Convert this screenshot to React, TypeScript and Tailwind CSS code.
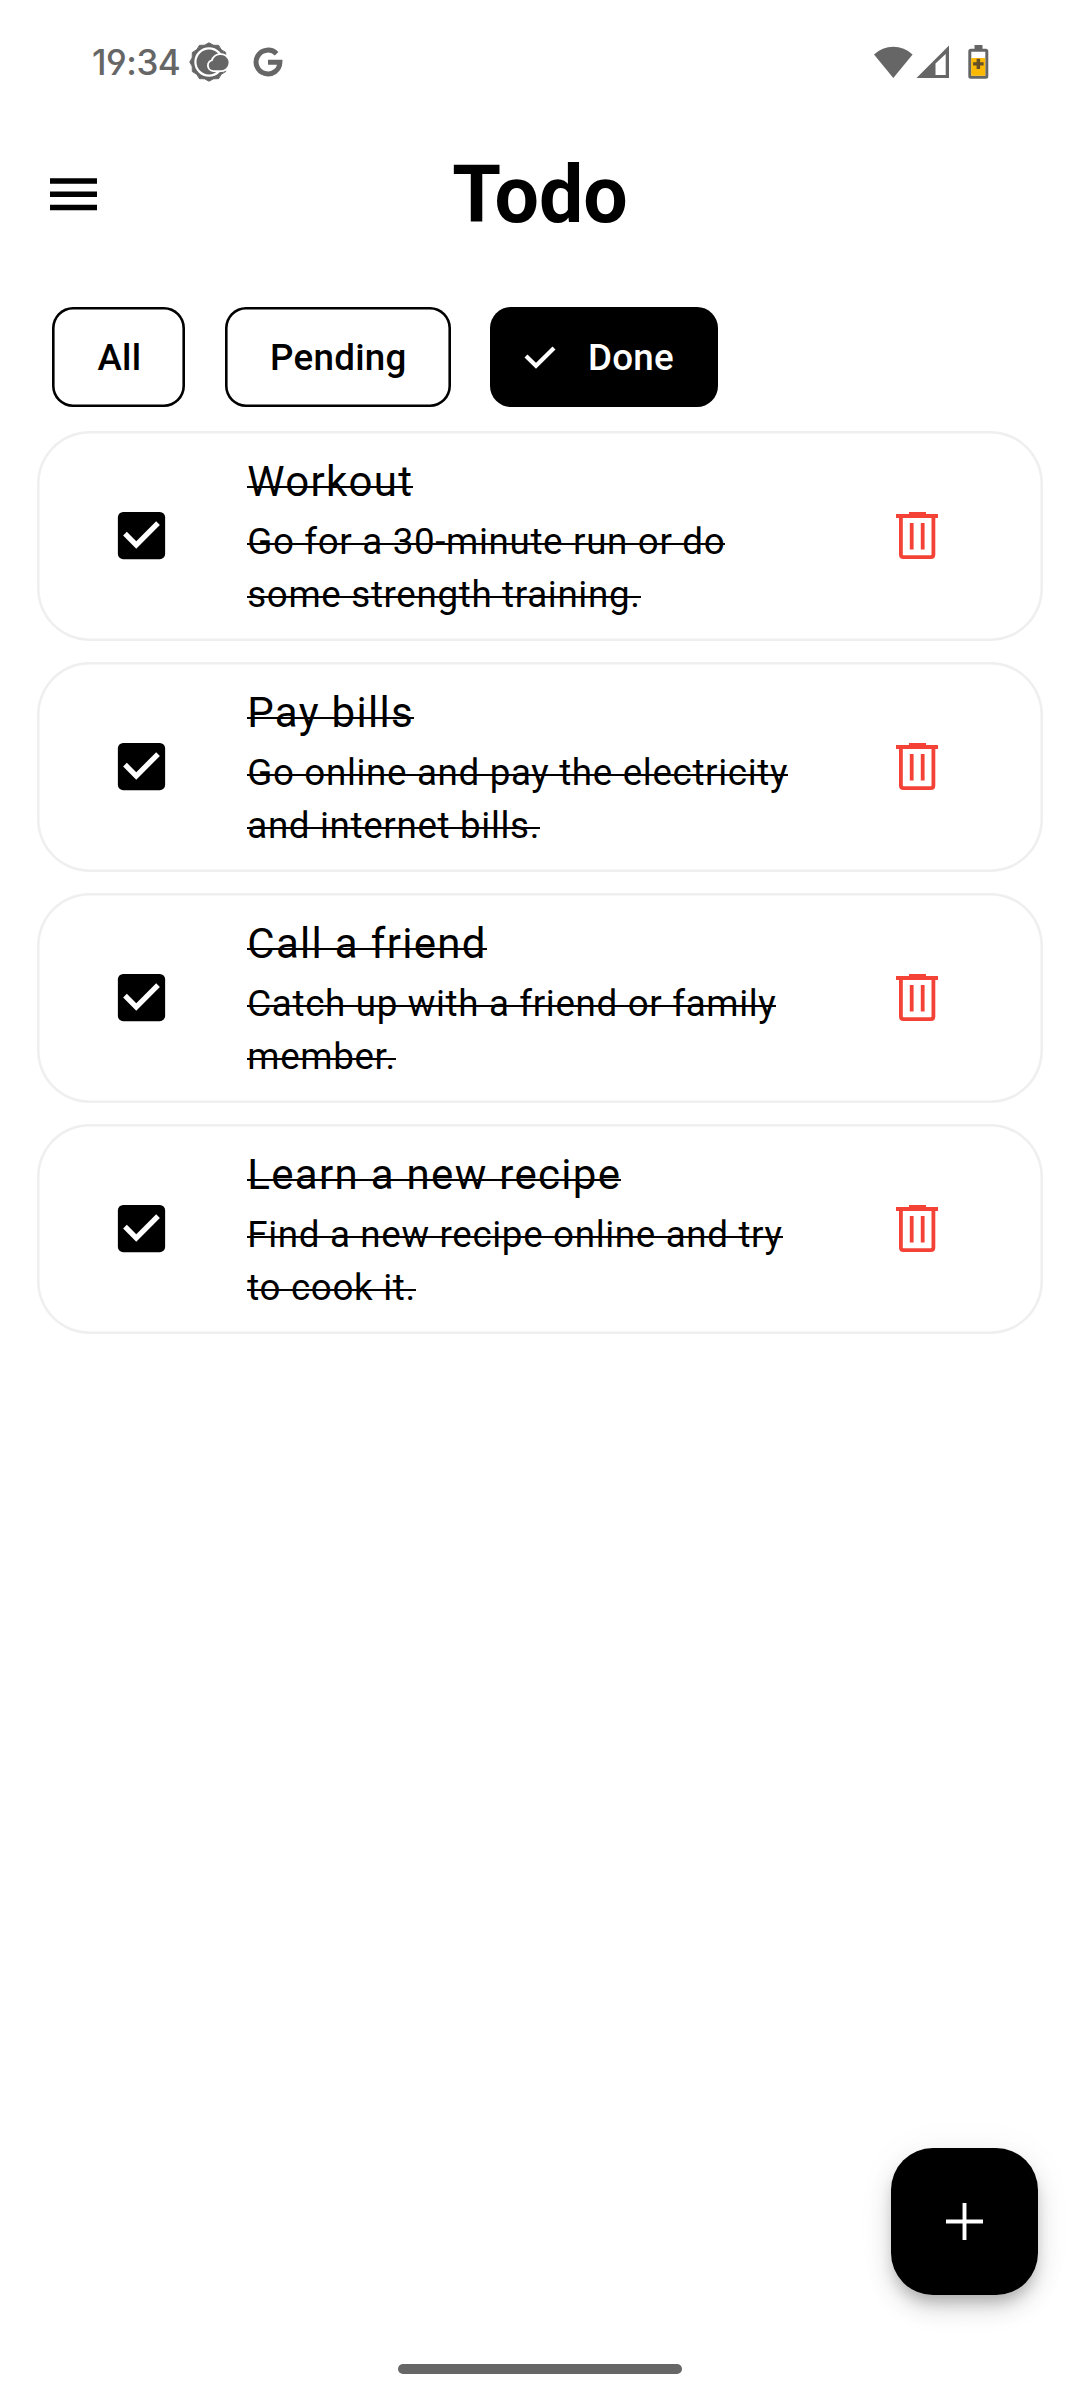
const tasks = [
  { title: "Workout", lines: ["Go for a 30-minute run or do", "some strength training."] },
  { title: "Pay bills", lines: ["Go online and pay the electricity", "and internet bills."] },
  { title: "Call a friend", lines: ["Catch up with a friend or family", "member."] },
  { title: "Learn a new recipe", lines: ["Find a new recipe online and try", "to cook it."] },
];

// Outline of the weather badge: twelve teeth joined by shallow curves.
function badgePath() {
  const n = 12;
  const at = (r: number, a: number) =>
    `${(20 + r * Math.cos(a)).toFixed(2)} ${(20 + r * Math.sin(a)).toFixed(2)}`;
  let d = `M${at(19.2, -Math.PI / 2)}`;
  for (let i = 0; i < n; i++) {
    const a = -Math.PI / 2 + (i * 2 * Math.PI) / n;
    const step = (2 * Math.PI) / n;
    d += `Q${at(16.2, a + step / 2)} ${at(19.2, a + step)}`;
  }
  return d + "Z";
}

function WeatherIcon() {
  const cloud = "M24.2 28.2a4.7 4.7 0 0 1-.6-9.3a8.3 8.3 0 0 1 15.2-1.6a7.6 7.6 0 0 1-6.6 10.9z";
  return (
    <svg className="h-10 w-10 shrink-0" viewBox="0 0 40 40">
      <path d={badgePath()} fill="#666" stroke="#666" strokeWidth="1" strokeLinejoin="round" />
      <circle cx="20" cy="20" r="13.6" fill="#666" stroke="#fff" strokeWidth="2.2" />
      <path d={cloud} fill="#fff" stroke="#fff" strokeWidth="3.6" />
      <path d={cloud} fill="#666" />
    </svg>
  );
}

function StatusBar() {
  return (
    <div className="flex h-[124px] items-center pl-[92px] pr-[91px] text-[#666]">
      <span className="w-[97px] whitespace-nowrap font-[Inter] text-[35px] leading-none font-medium tracking-[-0.5px] [font-feature-settings:'cv04','cv03']">
        19:34
      </span>
      <WeatherIcon />
      <svg className="ml-6 h-[30px] w-[30px]" viewBox="0 0 30 30">
        <path d="M23.6 6.8A11.9 11.9 0 1 0 26.9 15.3H15" fill="none" stroke="#666" strokeWidth="5" />
      </svg>
      <div className="ml-auto flex items-center">
        <svg className="h-[34px] w-[40px]" viewBox="0 0 40 34">
          <path d="M1 9.5A28 28 0 0 1 39.6 9.5L20.3 33z" fill="#666" />
        </svg>
        <svg className="ml-[3px] h-[34px] w-[34px]" viewBox="0 0 34 34">
          <path fillRule="evenodd" d="M0.5 33L33 .5V33zM19.5 18.5V30H29.7V9z" fill="#666" />
        </svg>
        <svg className="ml-[18px] h-[34px] w-[21px]" viewBox="0 0 21 34">
          <path d="M6.5 0h8v4h-8z" fill="#666" />
          <rect x="1.8" y="5.2" width="17" height="27" rx="1" fill="#fff" stroke="#666" strokeWidth="3" />
          <rect x="3.2" y="13" width="14" height="17.8" fill="#fbb904" />
          <path d="M8.6 13.8h3.5v3.4h3.5v3.4h-3.5v3.4H8.6v-3.4H5.1v-3.4h3.5z" fill="#665028" />
        </svg>
      </div>
    </div>
  );
}

function Chip({ label, selected = false, width }: { label: string; selected?: boolean; width: string }) {
  return (
    <button
      className={`flex h-[100px] items-center justify-center rounded-[21px] pt-[2px] text-[36.75px] font-medium tracking-[0.26px] ${width} ${
        selected ? "bg-black pr-[11px] text-white" : "pl-px text-black shadow-[inset_0_0_0_2.6px_#000]"
      }`}
    >
      {selected && (
        <svg className="mr-[32px] mb-[2px] h-[24px] w-[32px]" viewBox="0 0 32 24" fill="none">
          <path d="M2 11L12 20.8L30 3" stroke="#fff" strokeWidth="4.2" />
        </svg>
      )}
      {label}
    </button>
  );
}

function TrashIcon() {
  return (
    <svg className="h-[48px] w-[42px]" viewBox="0 0 42 48">
      <path d="M13 0h17v2h12v4H0V2h13z" fill="#f44336" />
      <path d="M4.9 5v37.5q0 2.6 2.6 2.6h27.3q2.6 0 2.6-2.6V5" fill="none" stroke="#f44336" strokeWidth="3.8" />
      <path d="M13.8 11h3.8v26.5h-3.8zM24.8 11h3.8v26.5h-3.8z" fill="#f44336" />
    </svg>
  );
}

function Task({ title, lines }: { title: string; lines: string[] }) {
  return (
    <li className="flex h-[210px] items-center rounded-[52.5px] pr-[105px] pl-[73px] shadow-[inset_0_0_0_2.6px_#efefef]">
      <svg className="mb-[2px] h-[63px] w-[63px] shrink-0" viewBox="0 0 24 24">
        <rect x="3" y="3" width="18" height="18" rx="2" />
        <path d="M10 17l-5-5 1.41-1.41L10 14.17l7.59-7.59L19 8z" fill="#fff" />
      </svg>
      <div className="mt-[19px] ml-[74.5px] flex-1 self-start whitespace-nowrap">
        <h2 className="text-[42px] leading-[63px] tracking-[1.3125px]">
          <span className="bg-[linear-gradient(#000,#000)] bg-[length:100%_2px] bg-[position:0_29px] bg-no-repeat">
            {title}
          </span>
        </h2>
        <p className="mt-[2px] text-[36.75px] leading-[53px] tracking-[0.656px]">
          {lines.map((line) => (
            <span key={line} className="block">
              <span className="bg-[linear-gradient(#000,#000)] bg-[length:100%_2px] bg-[position:0_23px] bg-no-repeat">
                {line}
              </span>
            </span>
          ))}
        </p>
      </div>
      <TrashIcon />
    </li>
  );
}

export default function App() {
  return (
    <div className="relative flex h-[2400px] w-[1080px] flex-col overflow-hidden bg-white font-[Roboto,sans-serif] text-black">
      <StatusBar />
      <header className="relative flex h-[140px] items-center justify-center">
        <svg className="absolute left-[50px] top-[54px] h-[33px] w-[47px]" viewBox="0 0 47 33">
          <path d="M0 0.3h47v5.4H0zM0 13.6h47v5.3H0zM0 26.8h47v5.4H0z" />
        </svg>
        <h1 className="pt-[3px] text-[78.75px] leading-none font-bold">Todo</h1>
      </header>
      <div className="mt-[43px] flex gap-[39.5px] pl-[52.4px]">
        <Chip label="All" width="w-[133px]" />
        <Chip label="Pending" width="w-[226px]" />
        <Chip label="Done" width="w-[228px]" selected />
      </div>
      <ul className="mx-[36.75px] mt-[24px] flex flex-col gap-[21px]">
        {tasks.map((t) => (
          <Task key={t.title} {...t} />
        ))}
      </ul>
      <button className="absolute right-[42px] bottom-[105px] flex h-[147px] w-[147px] items-center justify-center rounded-[42px] bg-black shadow-[0_10px_14px_-3px_rgba(0,0,0,0.2),0_14px_26px_rgba(0,0,0,0.12),0_3px_40px_rgba(0,0,0,0.05)]">
        <svg className="h-[37px] w-[37px]" viewBox="0 0 37 37">
          <path d="M0 18.5h37M18.5 0v37" stroke="#fff" strokeWidth="3.9" />
        </svg>
      </button>
      <div className="absolute bottom-[26px] left-[398px] h-[10px] w-[284px] rounded-full bg-[#666]" />
    </div>
  );
}
